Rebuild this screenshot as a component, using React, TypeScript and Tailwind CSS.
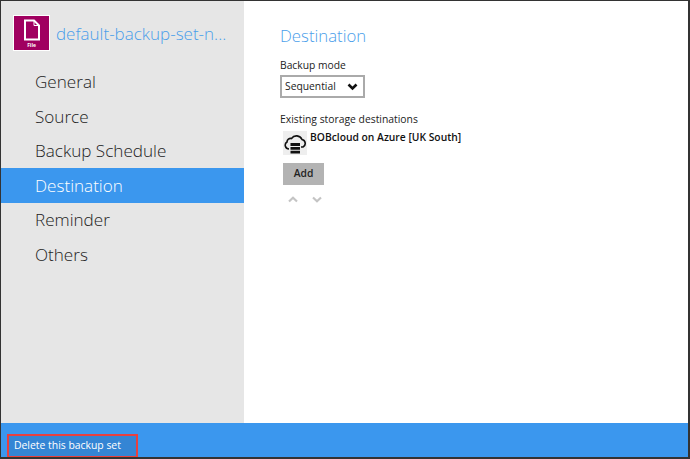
export default function App() {
  const items = ["General", "Source", "Backup Schedule", "Destination", "Reminder", "Others"];
  return (
    <div className="w-[690px] h-[459px] overflow-hidden flex flex-col bg-white border-t-[1px] border-l-[1px] border-r-[2px] border-b-[2px] border-[#333333] font-['Open_Sans',sans-serif]">
      <div className="flex flex-1 min-h-0">
        <aside className="w-[243px] bg-[#e6e6e6] flex flex-col pt-[14px]">
          <div className="flex items-center pl-[12px] h-[36px] gap-[6px]">
            <div className="w-[37px] h-[36px] bg-[#a00060] border border-white flex flex-col items-center shrink-0">
              <svg width="18" height="22" viewBox="0 0 18 22" className="mt-[3px]">
                <path d="M2 1.5H11L16 6.5V20.5H2Z" fill="#a00060" stroke="#ffffff" strokeWidth="2" />
                <path d="M11 1.5V6.5H16" fill="none" stroke="#ffffff" strokeWidth="1" />
              </svg>
              <span className="text-[5px] leading-[6px] font-bold text-white mt-[1px]">File</span>
            </div>
            <span className="text-[17px] leading-[24px] text-[#4a9eea] whitespace-nowrap font-light mt-[1px]">default-backup-set-n...</span>
          </div>
          <nav className="flex flex-col mt-[13.5px]">
            {items.map((t) => (
              <div
                key={t}
                className={`h-[34.5px] pl-[34px] pt-[1px] flex items-center text-[17.1px] font-light ${t === "Destination" ? "bg-[#3b97ee] text-white" : "text-[#222222]"}`}
              >
                {t}
              </div>
            ))}
          </nav>
        </aside>
        <main className="flex-1 pl-[36px] pt-[23px] text-[#222222]">
          <h1 className="text-[16.8px] leading-[24px] text-[#4a9eea] font-light">Destination</h1>
          <div className="text-[10.3px] leading-[15px] mt-[10px]">Backup mode</div>
          <div className="mt-[2px] w-[85px] h-[23px] border-2 border-[#aaaaaa] flex items-center justify-between pl-[3px] pr-[5px] text-[10.3px] bg-white">
            <span>Sequential</span>
            <svg width="11" height="8" viewBox="0 0 11 8">
              <path d="M1.5 1.5L5.5 5.5L9.5 1.5" fill="none" stroke="#111111" strokeWidth="2.6" />
            </svg>
          </div>
          <div className="text-[10.35px] leading-[15px] mt-[14px]">Existing storage destinations</div>
          <div className="flex mt-[4px]">
            <div className="w-[24px] h-[24px] bg-[#eeeeee] ml-[3px] flex items-center justify-center">
              <svg width="23" height="21" viewBox="0 0 23 21">
                <path d="M5 16A3.8 3.8 0 0 1 3 9A3.6 3.6 0 0 1 7.5 5.5A6 6 0 0 1 18 6.5A4 4 0 0 1 19 14H17" fill="none" stroke="#111111" strokeWidth="1.6" />
                <path d="M6.5 10H16V13H6.5ZM6.5 14H16V16.8H6.5ZM6.5 17.8H16V20.5H6.5Z" fill="#111111" />
              </svg>
            </div>
            <div className="ml-[3px] text-[10.3px] leading-[12px] font-semibold text-[#111111]">BOBcloud on Azure [UK South]</div>
          </div>
          <div className="mt-[8px] ml-[3px] w-[41px] h-[22px] bg-[#b3b3b3] flex items-center justify-center text-[10.3px] font-semibold text-[#222222]">Add</div>
          <div className="flex gap-[14px] ml-[8px] mt-[11px]">
            <svg width="10" height="7" viewBox="0 0 10 7">
              <path d="M1 5.5L5 1.8L9 5.5" fill="none" stroke="#c4c4c4" strokeWidth="2.2" />
            </svg>
            <svg width="10" height="7" viewBox="0 0 10 7">
              <path d="M1 1.5L5 5.2L9 1.5" fill="none" stroke="#c4c4c4" strokeWidth="2.2" />
            </svg>
          </div>
        </main>
      </div>
      <footer className="h-[34px] bg-[#3b97ee] flex items-end shrink-0">
        <div className="ml-[6px] mb-[-1px] w-[131px] h-[24px] border-2 border-[#e8403f] bg-[#3485d4] flex items-center pl-[5px] text-[10.4px] text-white">
          Delete this backup set
        </div>
      </footer>
    </div>
  );
}
